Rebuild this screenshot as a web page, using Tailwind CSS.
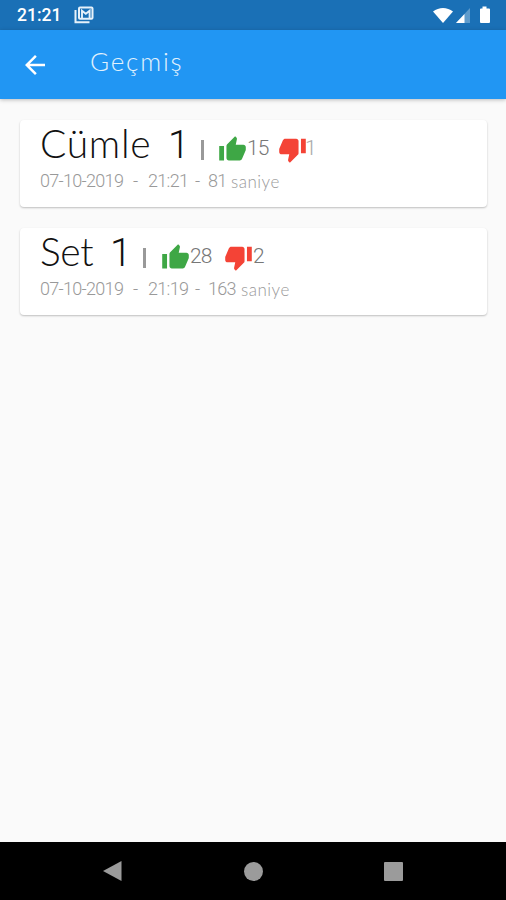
<!DOCTYPE html>
<html lang="tr">
<head>
    <meta charset="UTF-8">
    <meta name="viewport" content="width=device-width, initial-scale=1.0">
    <title>Geçmiş</title>
    <script src="https://cdn.jsdelivr.net/npm/@tailwindcss/browser@4"></script>
</head>
<body class="bg-[#fafafa]">
    <div class="flex h-[900px] w-[506px] flex-col overflow-hidden font-['Lato',sans-serif] font-light">
        <!-- status bar -->
        <div class="flex h-[30px] shrink-0 items-center bg-[#1a70b6] pl-[17px] pr-[15px] text-white">
            <span class="w-[57px] pt-[2px] font-['Roboto',sans-serif] text-[17.5px] font-medium leading-none">21:21</span>
            <svg class="h-[18px] w-[20px]" viewBox="0 0 20 18" fill="none" stroke="#e6f1fa">
                <path d="M1.500 4v12.300h14" stroke-width="2"/>
                <rect x="5" y="1.500" width="13.500" height="11.300" rx="1" stroke-width="2"/>
                <path d="M8 12V4.800l3.800 3 3.800-3V12" stroke-width="1.900"/>
            </svg>
            <svg class="ml-auto h-[17px] w-[20px]" viewBox="0 0 20 17" fill="#fff">
                <path d="M0 4.500C5.800-.2 14.200-.2 20 4.500L10 16z"/>
            </svg>
            <svg class="ml-[2px] h-[17px] w-[16px]" viewBox="0 0 16 17">
                <path d="M1 16 15 1v15z" fill="#5e9bcc"/>
                <path d="M1 16 9.500 7v9z" fill="#fff"/>
            </svg>
            <svg class="ml-[8px] h-[18px] w-[12px]" viewBox="0 0 12 18" fill="#fff">
                <path d="M3.500.5h4v2H10q1 0 1 1V16q0 1-1 1H2q-1 0-1-1V3.500q0-1 1-1h1.500z"/>
            </svg>
        </div>

        <!-- app bar -->
        <div class="flex h-[69px] shrink-0 items-center bg-[#2196f3] pl-[20px] text-white shadow-[0_1px_4px_rgba(0,0,0,0.25)]">
            <svg class="h-[30px] w-[30px]" viewBox="0 0 24 24" fill="#fff">
                <path d="M20 11H7.830l5.590-5.590L12 4l-8 8 8 8 1.410-1.410L7.830 13H20v-2z"/>
            </svg>
            <h1 class="ml-[40px] -mt-[7px] text-[26px] leading-none tracking-[1.8px] text-[#e3f2fd]">Geçmiş</h1>
        </div>

        <!-- history -->
        <div class="flex grow flex-col gap-[21px] pl-[20px] pt-[21px] pr-[19px]">
            <div class="h-[87px] rounded-[4px] bg-white pl-[20px] shadow-[0_1px_2px_rgba(0,0,0,0.24)]">
                <div class="flex h-[50px] items-start font-['Roboto',sans-serif] text-[21px] leading-none tracking-[-1px] text-[#777]">
                    <div class="flex w-[161px] text-[39px] text-[#111]">
                        <span class="w-[128px] pt-[4px] font-['Lato',sans-serif] tracking-[0.7px]">Cümle</span>
                        <span class="pt-[6px]">1</span>
                    </div>
                    <span class="mt-[20px] h-[20px] w-[3px] bg-[#999]"></span>
                    <svg class="ml-[14px] mt-[15px] h-[29px] w-[29px]" viewBox="0 0 24 24" fill="#3ea745">
                        <path d="M1 21h4V9H1v12zm22-11c0-1.100-.9-2-2-2h-6.310l.95-4.570.03-.32c0-.41-.17-.79-.44-1.060L14.170 1 7.590 7.590C7.220 7.950 7 8.450 7 9v10c0 1.100.9 2 2 2h9c.83 0 1.540-.5 1.840-1.220l3.020-7.050c.09-.23.14-.47.14-.73v-2z"/>
                    </svg>
                    <span class="w-[31px] pt-[18px]">15</span>
                    <svg class="mt-[15px] h-[29px] w-[29px]" viewBox="0 0 24 24" fill="#f44336">
                        <path d="M15 3H6c-.83 0-1.540.5-1.840 1.220l-3.020 7.050c-.09.23-.14.47-.14.73v2c0 1.100.9 2 2 2h6.310l-.95 4.570-.03.32c0 .41.17.79.44 1.060L9.830 23l6.590-6.590c.36-.36.58-.86.58-1.410V5c0-1.100-.9-2-2-2zm4 0v12h4V3h-4z"/>
                    </svg>
                    <span class="-ml-[2px] pt-[18px] text-[#aaa]">1</span>
                </div>
                <div class="flex pt-[2px] font-['Roboto',sans-serif] text-[18px] leading-none tracking-[-0.7px] text-[#999]">
                    <span class="w-[93px]">07-10-2019</span>
                    <span class="w-[15px]">-</span>
                    <span class="w-[47px]">21:21</span>
                    <span class="w-[13px]">-</span>
                    <span class="w-[23px]">81</span>
                    <span class="pt-px font-['Lato',sans-serif] text-[17px] tracking-[0.5px]">saniye</span>
                </div>
            </div>

            <div class="h-[87px] rounded-[4px] bg-white pl-[20px] shadow-[0_1px_2px_rgba(0,0,0,0.24)]">
                <div class="flex h-[50px] items-start font-['Roboto',sans-serif] text-[21px] leading-none tracking-[-1px] text-[#777]">
                    <div class="flex w-[103px] text-[39px] text-[#111]">
                        <span class="w-[70px] pt-[4px] font-['Lato',sans-serif] tracking-[-0.4px]">Set</span>
                        <span class="pt-[6px]">1</span>
                    </div>
                    <span class="mt-[20px] h-[20px] w-[3px] bg-[#999]"></span>
                    <svg class="ml-[15px] mt-[15px] h-[29px] w-[29px]" viewBox="0 0 24 24" fill="#3ea745">
                        <path d="M1 21h4V9H1v12zm22-11c0-1.100-.9-2-2-2h-6.310l.95-4.570.03-.32c0-.41-.17-.79-.44-1.060L14.170 1 7.590 7.590C7.220 7.950 7 8.450 7 9v10c0 1.100.9 2 2 2h9c.83 0 1.540-.5 1.840-1.220l3.020-7.050c.09-.23.14-.47.14-.73v-2z"/>
                    </svg>
                    <span class="w-[34px] pt-[18px]">28</span>
                    <svg class="mt-[15px] h-[29px] w-[29px]" viewBox="0 0 24 24" fill="#f44336">
                        <path d="M15 3H6c-.83 0-1.540.5-1.840 1.220l-3.020 7.050c-.09.23-.14.47-.14.73v2c0 1.100.9 2 2 2h6.310l-.95 4.570-.03.32c0 .41.17.79.44 1.060L9.830 23l6.590-6.590c.36-.36.58-.86.58-1.410V5c0-1.100-.9-2-2-2zm4 0v12h4V3h-4z"/>
                    </svg>
                    <span class="pt-[18px]">2</span>
                </div>
                <div class="flex pt-[2px] font-['Roboto',sans-serif] text-[18px] leading-none tracking-[-0.7px] text-[#999]">
                    <span class="w-[93px]">07-10-2019</span>
                    <span class="w-[15px]">-</span>
                    <span class="w-[47px]">21:19</span>
                    <span class="w-[13px]">-</span>
                    <span class="w-[33px]">163</span>
                    <span class="pt-px font-['Lato',sans-serif] text-[17px] tracking-[0.5px]">saniye</span>
                </div>
            </div>
        </div>

        <!-- navigation bar -->
        <div class="flex h-[58px] shrink-0 items-center bg-black pl-[103px]">
            <svg class="h-[20px] w-[19px]" viewBox="0 0 19 20" fill="#9b9b9b">
                <path d="M0 10 18.500 0v20z"/>
            </svg>
            <span class="ml-[122px] h-[19px] w-[19px] rounded-full bg-[#9b9b9b]"></span>
            <span class="ml-[121px] h-[19px] w-[19px] rounded-[1px] bg-[#9b9b9b]"></span>
        </div>
    </div>
</body>
</html>
